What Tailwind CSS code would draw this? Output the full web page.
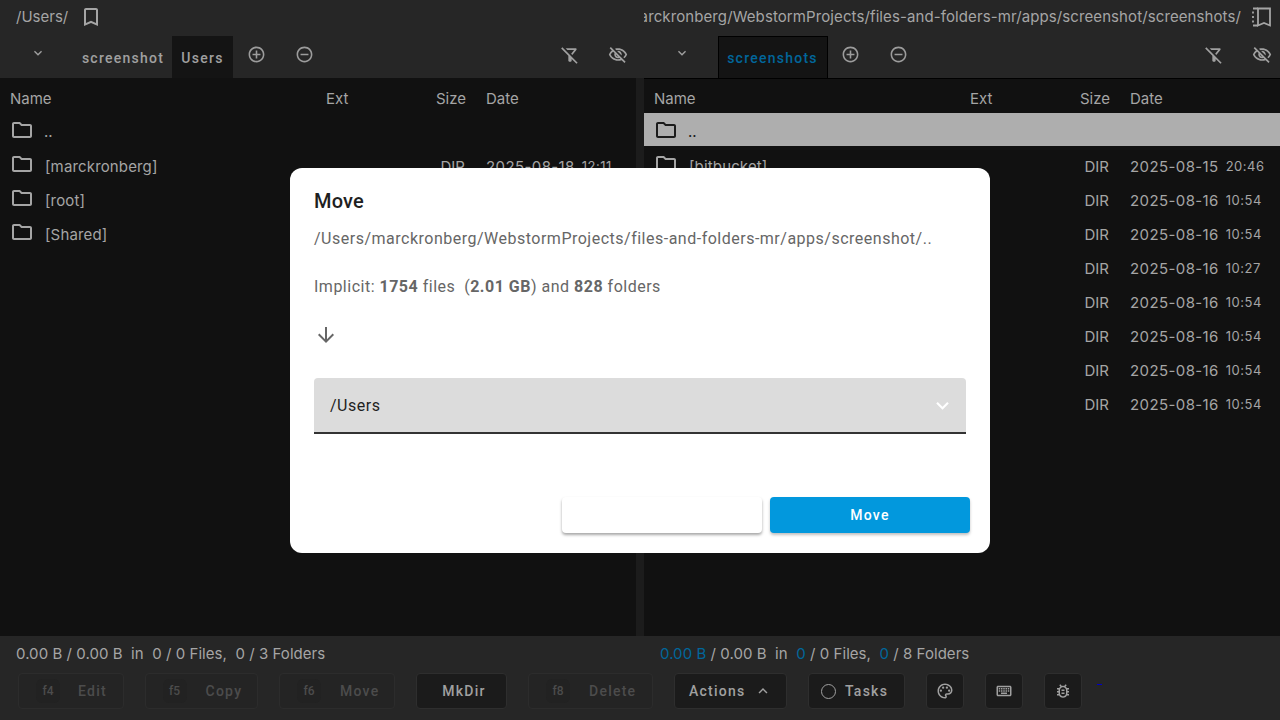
<!DOCTYPE html>
<html lang="en">
<head>
    <meta charset="UTF-8">
    <title>Files and Folders</title>
    <script src="https://cdn.jsdelivr.net/npm/@tailwindcss/browser@4"></script>
</head>
<body class="h-[720px] w-[1280px] overflow-hidden bg-[#262626] font-['Inter',sans-serif] text-[#a5a5a5]">
    <svg class="hidden">
        <symbol id="i-bookmark" viewBox="0 0 24 24"><path fill="currentColor" d="M17 3H7c-1.1 0-2 .9-2 2v16l7-3 7 3V5c0-1.1-.9-2-2-2zm0 15l-5-2.18L7 18V5h10v13z"/></symbol>
        <symbol id="i-down" viewBox="0 0 24 24"><path fill="currentColor" d="M7.41 8.59L12 13.17l4.59-4.58L18 10l-6 6-6-6 1.41-1.41z"/></symbol>
        <symbol id="i-up" viewBox="0 0 24 24"><path fill="currentColor" d="M7.41 15.41L12 10.83l4.59 4.58L18 14l-6-6-6 6z"/></symbol>
        <symbol id="i-plus" viewBox="0 0 24 24"><path fill="currentColor" d="M13 7h-2v4H7v2h4v4h2v-4h4v-2h-4V7zm-1-5C6.48 2 2 6.48 2 12s4.48 10 10 10 10-4.48 10-10S17.52 2 12 2zm0 18c-4.41 0-8-3.59-8-8s3.59-8 8-8 8 3.59 8 8-3.59 8-8 8z"/></symbol>
        <symbol id="i-minus" viewBox="0 0 24 24"><path fill="currentColor" d="M7 11v2h10v-2H7zm5-9C6.48 2 2 6.48 2 12s4.48 10 10 10 10-4.48 10-10S17.52 2 12 2zm0 18c-4.41 0-8-3.59-8-8s3.59-8 8-8 8 3.59 8 8-3.59 8-8 8z"/></symbol>
        <symbol id="i-filter" viewBox="0 0 24 24"><path fill="currentColor" d="M16.95 6l-3.57 4.55 1.43 1.43c1.03-1.31 4.98-6.37 4.98-6.37C20.3 5.07 19.83 4 19.03 4H6.83l2 2h8.12zM2.81 2.81 1.39 4.22 10 13v6c0 .55.45 1 1 1h2c.55 0 1-.45 1-1v-2.17l5.78 5.78 1.41-1.41L2.81 2.81z"/></symbol>
        <symbol id="i-eye" viewBox="0 0 24 24"><path fill="currentColor" d="M12 6c3.79 0 7.17 2.13 8.82 5.5-.59 1.22-1.42 2.27-2.41 3.12l1.41 1.41c1.39-1.23 2.49-2.77 3.18-4.53C21.27 7.11 17 4 12 4c-1.27 0-2.49.2-3.64.57l1.65 1.65C10.66 6.09 11.32 6 12 6zm-1.07 1.14L13 9.21c.57.25 1.03.71 1.28 1.28l2.07 2.07c.08-.34.14-.7.14-1.07C16.5 9.01 14.48 7 12 7c-.37 0-.72.05-1.07.14zM2.01 3.87l2.68 2.68C3.06 7.83 1.77 9.53 1 11.5 2.73 15.89 7 19 12 19c1.52 0 2.98-.29 4.32-.82l3.42 3.42 1.41-1.41L3.42 2.45 2.01 3.87zm7.5 7.5l2.61 2.61c-.04.01-.08.02-.12.02-1.38 0-2.5-1.12-2.5-2.5 0-.05.01-.08.01-.13zm-3.4-3.4l1.75 1.75c-.23.55-.36 1.15-.36 1.78 0 2.48 2.02 4.5 4.5 4.5.63 0 1.23-.13 1.77-.36l.98.98c-.88.24-1.8.38-2.75.38-3.79 0-7.17-2.13-8.82-5.5.7-1.43 1.72-2.61 2.93-3.53z"/></symbol>
        <symbol id="i-folder" viewBox="0 0 24 24"><path fill="currentColor" d="M9.17 6l2 2H20v10H4V6h5.17M10 4H4c-1.1 0-1.99.9-1.99 2L2 18c0 1.1.9 2 2 2h16c1.1 0 2-.9 2-2V8c0-1.1-.9-2-2-2h-8l-2-2z"/></symbol>
        <symbol id="i-arrow" viewBox="0 0 24 24"><path fill="currentColor" d="M20 12l-1.41-1.41L13 16.17V4h-2v12.17l-5.58-5.6L4 12l8 8 8-8z"/></symbol>
        <symbol id="i-palette" viewBox="0 0 24 24"><path fill="currentColor" d="M12 22C6.49 22 2 17.51 2 12S6.49 2 12 2s10 4.04 10 9c0 3.31-2.69 6-6 6h-1.77c-.28 0-.5.22-.5.5 0 .12.05.23.13.33.41.47.64 1.06.64 1.67 0 1.38-1.12 2.5-2.5 2.5zm0-18c-4.41 0-8 3.59-8 8s3.59 8 8 8c.28 0 .5-.22.5-.5 0-.16-.08-.28-.14-.35-.41-.46-.63-1.05-.63-1.65 0-1.38 1.12-2.5 2.5-2.5H16c2.21 0 4-1.79 4-4 0-3.86-3.59-7-8-7z"/><circle fill="currentColor" cx="6.5" cy="11.5" r="1.5"/><circle fill="currentColor" cx="9.5" cy="7.5" r="1.5"/><circle fill="currentColor" cx="14.5" cy="7.5" r="1.5"/><circle fill="currentColor" cx="17.5" cy="11.5" r="1.5"/></symbol>
        <symbol id="i-keyboard" viewBox="0 0 24 24"><path fill="currentColor" d="M20 7v10H4V7h16m0-2H4c-1.1 0-1.99.9-1.99 2L2 17c0 1.1.9 2 2 2h16c1.1 0 2-.9 2-2V7c0-1.1-.9-2-2-2zm-9 3h2v2h-2zm0 3h2v2h-2zM8 8h2v2H8zm0 3h2v2H8zm-3 0h2v2H5zm0-3h2v2H5zm3 6h8v2H8zm6-3h2v2h-2zm0-3h2v2h-2zm3 3h2v2h-2zm0-3h2v2h-2z"/></symbol>
        <symbol id="i-bug" viewBox="0 0 24 24"><path fill="currentColor" d="M20 8h-2.81c-.45-.78-1.07-1.45-1.82-1.96L17 4.41 15.59 3l-2.17 2.17C12.96 5.06 12.49 5 12 5s-.96.06-1.41.17L8.41 3 7 4.41l1.62 1.63C7.88 6.55 7.26 7.22 6.81 8H4v2h2.09c-.05.33-.09.66-.09 1v1H4v2h2v1c0 .34.04.67.09 1H4v2h2.81c1.04 1.79 2.97 3 5.19 3s4.15-1.21 5.19-3H20v-2h-2.09c.05-.33.09-.66.09-1v-1h2v-2h-2v-1c0-.34-.04-.67-.09-1H20V8zm-4 4v3c0 .22-.02.47-.06.7l-.1.65-.37.65c-.72 1.24-2.04 2-3.47 2s-2.75-.77-3.47-2l-.37-.64-.1-.65C8.02 15.47 8 15.22 8 15v-4c0-.22.02-.47.06-.69l.1-.65.37-.66c.3-.52.72-.97 1.21-1.31l.57-.39.74-.18c.31-.08.63-.12.95-.12.32 0 .65.04.95.12l.68.16.61.42c.5.34.91.78 1.21 1.31l.38.65.1.65c.04.22.06.47.06.69v1zm-6 2h4v2h-4zm0-4h4v2h-4z"/></symbol>
    </svg>

    <div class="flex h-[636px]">
        <!-- left pane -->
        <section class="flex w-[636px] flex-col">
            <div class="flex h-[36px] items-center pb-[3px] pl-[16px] text-[15px]">
                <span class="pt-[2px]">/Users/</span>
                <svg class="ml-[11px] size-[24px]"><use href="#i-bookmark"/></svg>
            </div>
            <div class="flex h-[42px] items-stretch font-['Roboto',sans-serif] text-[14px] font-medium tracking-[1.25px] text-[#a0a0a0]">
                <div class="flex w-[75px] justify-center pl-[1px] pt-[9px]"><svg class="size-[16px]"><use href="#i-down"/></svg></div>
                <div class="mr-[1px] flex w-[96px] items-center justify-center pt-[2px]">screenshot</div>
                <div class="flex w-[61px] items-center justify-center bg-[#141414] pt-[2px]">Users</div>
                <svg class="ml-[14px] mt-[9px] size-[19px] text-[#9c9c9c]"><use href="#i-plus"/></svg>
                <svg class="ml-[29px] mt-[9px] size-[19px] text-[#9c9c9c]"><use href="#i-minus"/></svg>
                <svg class="ml-auto mt-[9px] size-[20px]"><use href="#i-filter"/></svg>
                <svg class="ml-[28px] mr-[8px] mt-[9px] size-[20px]"><use href="#i-eye"/></svg>
            </div>
            <div class="flex-1 bg-[#111111] text-[15px]">
                <div class="grid h-[35px] grid-cols-[316px_90px_50px_1fr] items-center pl-[10px] pt-[7px]">
                    <span>Name</span><span>Ext</span><span class="text-right">Size</span><span class="pl-[20px]">Date</span>
                </div>
                <div class="flex h-[33px] items-center pl-[10px]">
                    <svg class="size-[24px]"><use href="#i-folder"/></svg><span class="ml-[10px] pt-[5px]">..</span>
                </div>
                <div class="flex h-[34px] items-center pl-[10px] pt-[8px]">
                    <svg class="-mt-[7px] size-[24px]"><use href="#i-folder"/></svg><span class="ml-[11px] w-[395px] tracking-[.15px]">[marckronberg]</span>
                    <span class="w-[25px] text-right">DIR</span><span class="ml-[21px] tracking-[.4px]">2025-08-18</span><span class="ml-[7px] text-[13px] tracking-[.5px]">12:11</span>
                </div>
                <div class="flex h-[34px] items-center pl-[10px] pt-[8px]">
                    <svg class="-mt-[7px] size-[24px]"><use href="#i-folder"/></svg><span class="ml-[11px] tracking-[.15px]">[root]</span>
                </div>
                <div class="flex h-[34px] items-center pl-[10px] pt-[8px]">
                    <svg class="-mt-[7px] size-[24px]"><use href="#i-folder"/></svg><span class="ml-[11px] tracking-[.15px]">[Shared]</span>
                </div>
            </div>
        </section>

        <div class="mt-[78px] w-[8px] bg-[#1c1c1c]"></div>

        <!-- right pane -->
        <section class="flex w-[636px] flex-col">
            <div class="flex h-[36px] items-center pb-[3px] text-[15px]">
                <div class="flex w-[597px] justify-end overflow-hidden whitespace-nowrap pt-[2px] tracking-[.1px]"><span class="shrink-0">/Users/marckronberg/WebstormProjects/files-and-folders-mr/apps/screenshot/screenshots/</span></div>
                <svg class="ml-[11px] h-[20px] w-[20px]" viewBox="0 0 20 20" fill="none" stroke="currentColor" stroke-width="1.8">
                    <path d="M6 1.500H1M6 18.500H1M1 4.500v2M1 9v2M1 13.500v2"/>
                    <path d="M6 1.500h12v17l-6-2.500-6 2.500z"/>
                </svg>
            </div>
            <div class="flex h-[42px] items-stretch font-['Roboto',sans-serif] text-[14px] font-medium tracking-[1.25px] text-[#a0a0a0]">
                <div class="flex w-[74px] justify-center pl-[2px] pt-[9px]"><svg class="size-[16px]"><use href="#i-down"/></svg></div>
                <div class="flex w-[110px] items-center justify-center border border-b-0 border-black bg-[#141414] pr-[1px] pt-[2px] text-[#01669b]">screenshots</div>
                <svg class="ml-[13px] mt-[9px] size-[19px] text-[#9c9c9c]"><use href="#i-plus"/></svg>
                <svg class="ml-[29px] mt-[9px] size-[19px] text-[#9c9c9c]"><use href="#i-minus"/></svg>
                <svg class="ml-auto mt-[9px] size-[20px]"><use href="#i-filter"/></svg>
                <svg class="ml-[28px] mr-[8px] mt-[9px] size-[20px]"><use href="#i-eye"/></svg>
            </div>
            <div class="flex-1 border-t border-black bg-[#111111] text-[15px]">
                <div class="grid h-[34px] grid-cols-[316px_90px_50px_1fr] items-center pl-[10px] pt-[7px]">
                    <span>Name</span><span>Ext</span><span class="text-right">Size</span><span class="pl-[20px]">Date</span>
                </div>
                <div class="flex h-[33px] items-center bg-[#aeaeae] pl-[10px] text-[#1b1b1b]">
                    <svg class="size-[24px]"><use href="#i-folder"/></svg><span class="ml-[10px] pt-[5px]">..</span>
                </div>
                <div class="flex h-[34px] items-center pl-[10px] pt-[8px]">
                    <svg class="-mt-[7px] size-[24px]"><use href="#i-folder"/></svg><span class="ml-[11px] w-[395px] tracking-[.15px]">[bitbucket]</span>
                    <span class="w-[25px] text-right">DIR</span><span class="ml-[21px] tracking-[.4px]">2025-08-15</span><span class="ml-[7px] text-[13px] tracking-[.5px]">20:46</span>
                </div>
                <div class="flex h-[34px] items-center pl-[440px] pt-[8px]"><span class="w-[25px] text-right">DIR</span><span class="ml-[21px] tracking-[.4px]">2025-08-16</span><span class="ml-[7px] text-[13px] tracking-[.5px]">10:54</span></div>
                <div class="flex h-[34px] items-center pl-[440px] pt-[8px]"><span class="w-[25px] text-right">DIR</span><span class="ml-[21px] tracking-[.4px]">2025-08-16</span><span class="ml-[7px] text-[13px] tracking-[.5px]">10:54</span></div>
                <div class="flex h-[34px] items-center pl-[440px] pt-[8px]"><span class="w-[25px] text-right">DIR</span><span class="ml-[21px] tracking-[.4px]">2025-08-16</span><span class="ml-[7px] text-[13px] tracking-[.5px]">10:27</span></div>
                <div class="flex h-[34px] items-center pl-[440px] pt-[8px]"><span class="w-[25px] text-right">DIR</span><span class="ml-[21px] tracking-[.4px]">2025-08-16</span><span class="ml-[7px] text-[13px] tracking-[.5px]">10:54</span></div>
                <div class="flex h-[34px] items-center pl-[440px] pt-[8px]"><span class="w-[25px] text-right">DIR</span><span class="ml-[21px] tracking-[.4px]">2025-08-16</span><span class="ml-[7px] text-[13px] tracking-[.5px]">10:54</span></div>
                <div class="flex h-[34px] items-center pl-[440px] pt-[8px]"><span class="w-[25px] text-right">DIR</span><span class="ml-[21px] tracking-[.4px]">2025-08-16</span><span class="ml-[7px] text-[13px] tracking-[.5px]">10:54</span></div>
                <div class="flex h-[34px] items-center pl-[440px] pt-[8px]"><span class="w-[25px] text-right">DIR</span><span class="ml-[21px] tracking-[.4px]">2025-08-16</span><span class="ml-[7px] text-[13px] tracking-[.5px]">10:54</span></div>
            </div>
        </section>
    </div>

    <!-- footer -->
    <footer class="h-[84px]">
        <div class="flex h-[37px] items-center text-[15px] tracking-[.05px]">
            <div class="w-[660px] whitespace-pre pl-[16px]">0.00 B / 0.00 B  in  0 / 0 Files,  0 / 3 Folders</div>
            <div class="whitespace-pre"><span class="text-[#01669b]">0.00 B</span> / 0.00 B  in  <span class="text-[#01669b]">0</span> / 0 Files,  <span class="text-[#01669b]">0</span> / 8 Folders</div>
        </div>
        <div class="flex h-[36px] items-stretch gap-[21px] pl-[18px] font-['Roboto',sans-serif] text-[14px] font-medium tracking-[1.25px] text-[#a0a0a0]">
            <div class="flex w-[105.5px] items-center rounded-[4px] border border-[#2c2c2c] bg-[#242424] pl-[17px] text-[#4c4c4c]"><span class="flex size-[24px] items-center justify-center rounded-[6px] bg-[#222222] text-[12px] tracking-normal">f4</span><span class="ml-[18px]">Edit</span></div>
            <div class="flex w-[113.5px] items-center rounded-[4px] border border-[#2c2c2c] bg-[#242424] pl-[17px] text-[#4c4c4c]"><span class="flex size-[24px] items-center justify-center rounded-[6px] bg-[#222222] text-[12px] tracking-normal">f5</span><span class="ml-[19px]">Copy</span></div>
            <div class="flex w-[116px] items-center rounded-[4px] border border-[#2c2c2c] bg-[#242424] pl-[17px] text-[#4c4c4c]"><span class="flex size-[24px] items-center justify-center rounded-[6px] bg-[#222222] text-[12px] tracking-normal">f6</span><span class="ml-[19px]">Move</span></div>
            <div class="flex w-[91px] items-center justify-center rounded-[4px] border border-[#2e2e2e] bg-[#1b1b1b] pl-[5px]">MkDir</div>
            <div class="flex w-[125px] items-center rounded-[4px] border border-[#2c2c2c] bg-[#242424] pl-[17px] text-[#4c4c4c]"><span class="flex size-[24px] items-center justify-center rounded-[6px] bg-[#222222] text-[12px] tracking-normal">f8</span><span class="ml-[19px]">Delete</span></div>
            <div class="flex w-[113px] items-center rounded-[4px] border border-[#2e2e2e] bg-[#1b1b1b] pl-[14px]">Actions<svg class="ml-[8px] size-[18px]"><use href="#i-up"/></svg></div>
            <div class="flex w-[96.500px] items-center rounded-[4px] border border-[#2e2e2e] bg-[#1b1b1b] pl-[12px]"><span class="size-[15px] rounded-full border-[1.5px] border-[#a0a0a0]"></span><span class="ml-[9px]">Tasks</span></div>
            <div class="flex w-[38px] items-center justify-center rounded-[4px] border border-[#2e2e2e] bg-[#1b1b1b]"><svg class="size-[18px]"><use href="#i-palette"/></svg></div>
            <div class="flex w-[38px] items-center justify-center rounded-[4px] border border-[#2e2e2e] bg-[#1b1b1b]"><svg class="size-[18px]"><use href="#i-keyboard"/></svg></div>
            <div class="flex w-[38px] items-center justify-center rounded-[4px] border border-[#2e2e2e] bg-[#1b1b1b]"><svg class="size-[18px]"><use href="#i-bug"/></svg></div>
            <div class="-ml-[6px] mt-[11px] h-px w-[5px] bg-[#0000c8]"></div>
        </div>
    </footer>

    <!-- move dialog -->
    <div class="absolute left-[290px] top-[168px] flex h-[385px] w-[700px] flex-col rounded-[12px] bg-white px-[24px] pt-[21px] font-['Roboto',sans-serif] text-[#666666]">
        <h2 class="text-[20px] leading-[24px] font-medium tracking-[.2px] text-[#1f1f1f]">Move</h2>
        <p class="mt-[14px] text-[16px] leading-[24px] tracking-[.5px]">/Users/marckronberg/WebstormProjects/files-and-folders-mr/apps/screenshot/..</p>
        <p class="mt-[24px] whitespace-pre text-[16px] leading-[24px] tracking-[.5px]">Implicit: <b class="font-bold">1754</b> files  (<b class="font-bold">2.01 GB</b>) and <b class="font-bold">828</b> folders</p>
        <svg class="mt-[24px] size-[24px]"><use href="#i-arrow"/></svg>
        <div class="mt-[31px] flex h-[56px] w-[652px] items-center justify-between rounded-t-[4px] border-b-2 border-[#333333] bg-[#dcdcdc] pl-[16px] pr-[11.5px] text-[16px] tracking-[.5px] text-[#1f1f1f]">
            <span class="pt-[2px]">/Users</span>
            <svg class="size-[25px] text-white"><use href="#i-down"/></svg>
        </div>
        <div class="ml-[248px] mt-[63px] flex w-[408px] shrink-0 gap-[8px]">
            <div class="h-[36px] w-[200px] shrink-0 rounded-[4px] bg-white shadow-[0_2px_3px_rgba(0,0,0,.35)]"></div>
            <div class="flex h-[36px] w-[200px] shrink-0 items-center justify-center rounded-[4px] bg-[#0298dd] pt-[1px] text-[14px] font-medium tracking-[1.25px] text-white shadow-[0_2px_3px_rgba(0,0,0,.25)]">Move</div>
        </div>
    </div>
</body>
</html>
